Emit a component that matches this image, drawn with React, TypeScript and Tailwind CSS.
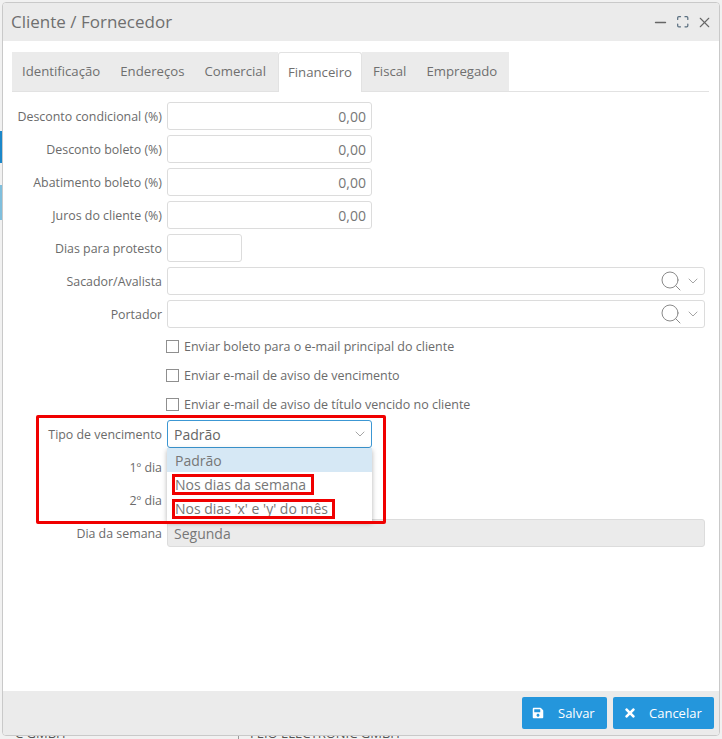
import { Maximize, Minus, Search, X, ChevronDown } from "lucide-react";
import { FaSave, FaTimes } from "react-icons/fa";

const font = "font-['Open_Sans',sans-serif]";

function Label({ children }: { children: React.ReactNode }) {
  return (
    <div className="w-[162px] shrink-0 whitespace-nowrap pr-[5px] pt-[2px] text-right text-[12.4px] text-[#6b6b6b]">
      {children}
    </div>
  );
}

function Row({ label, children }: { label: string; children?: React.ReactNode }) {
  return (
    <div className="flex h-[28px] items-center">
      <Label>{label}</Label>
      {children}
    </div>
  );
}

function NumberInput({ value }: { value: string }) {
  return (
    <div className="flex h-[28px] w-[205px] items-center justify-end rounded-[3px] border border-[#dcdcdc] bg-white pr-[5px] text-[14px] text-[#777]">
      {value}
    </div>
  );
}

function LookupInput() {
  return (
    <div className="flex h-[28px] w-[538px] items-center justify-end rounded-[3px] border border-[#dcdcdc] bg-white pr-[3px]">
      <Search size={24} strokeWidth={1} className="mr-[2px] text-[#8a8a8a]" />
      <ChevronDown size={16} strokeWidth={1} className="text-[#777]" />
    </div>
  );
}

function Check({ label }: { label: string }) {
  return (
    <div className="flex h-[29px] items-center pl-[161px]">
      <span className="h-[13px] w-[13px] shrink-0 border border-[#8f8f8f] bg-white" />
      <span className="ml-[5px] pt-[2px] text-[12.5px] text-[#6b6b6b]">{label}</span>
    </div>
  );
}

const tabs = ["Identificação", "Endereços", "Comercial", "Financeiro", "Fiscal", "Empregado"];

export default function App() {
  return (
    <div className={`relative h-[739px] w-[722px] overflow-hidden bg-[#f1f1f1] pl-[2px] pt-[2px] ${font}`}>
      {/* bits of the page behind the window */}
      <div className="absolute left-0 top-[131px] h-[32px] w-[2px] bg-[#1b87c9]" />
      <div className="absolute left-0 top-[185px] h-[35px] w-[2px] bg-[#7fbfdd]" />
      <div className="absolute left-[15px] top-[724px] text-[13px] text-[#555]">C GMBH</div>
      <div className="absolute left-[238px] top-[735px] h-[4px] w-px bg-[#999]" />
      <div className="absolute left-[250px] top-[724px] text-[13px] text-[#555]">FEIO ELECTRONIC GMBH</div>

      <div className="relative flex h-[734px] w-[718px] flex-col overflow-hidden rounded-[4px] border border-[#c9c9c9] bg-white">
        <div className="flex h-[38px] shrink-0 items-center justify-between bg-[#ebebeb] pl-[8px] pr-[6px]">
          <span className="text-[17px] text-[#6f6f6f]">Cliente / Fornecedor</span>
          <div className="flex items-center gap-[7px] text-[#666]">
            <Minus size={17} strokeWidth={2} />
            <Maximize size={13.5} strokeWidth={2.2} className="text-[#5a6f80]" />
            <X size={17} strokeWidth={1.5} />
          </div>
        </div>

        <div className="flex min-h-0 flex-1 flex-col pl-[9px] pr-[10px] pt-[11px]">
          <div className="flex h-[40px] shrink-0 border-b border-[#e2e2e2]">
            <div className="flex h-[39px] w-[266px] items-center bg-[#ebebeb] pl-[10px] text-[13.2px] text-[#6f6f6f]">
              <span>{tabs[0]}</span>
              <span className="ml-[20px]">{tabs[1]}</span>
              <span className="ml-[20px]">{tabs[2]}</span>
            </div>
            <div className="flex h-[40px] w-[84px] items-center justify-center rounded-t-[3px] border-x border-t border-[#e2e2e2] bg-white text-[13.2px] text-[#6f6f6f]">
              {tabs[3]}
            </div>
            <div className="flex h-[39px] items-center bg-[#ebebeb] pl-[11px] pr-[12px] text-[13.2px] text-[#6f6f6f]">
              <span>{tabs[4]}</span>
              <span className="ml-[20px]">{tabs[5]}</span>
            </div>
          </div>

          <div className="-ml-[7px] flex flex-col gap-[5px] pt-[10px]">
            <Row label="Desconto condicional (%)"><NumberInput value="0,00" /></Row>
            <Row label="Desconto boleto (%)"><NumberInput value="0,00" /></Row>
            <Row label="Abatimento boleto (%)"><NumberInput value="0,00" /></Row>
            <Row label="Juros do cliente (%)"><NumberInput value="0,00" /></Row>
            <Row label="Dias para protesto">
              <div className="h-[28px] w-[75px] rounded-[3px] border border-[#dcdcdc] bg-white" />
            </Row>
            <Row label="Sacador/Avalista"><LookupInput /></Row>
            <Row label="Portador"><LookupInput /></Row>
          </div>

          <div className="-ml-[7px] flex flex-col pt-[4px]">
            <Check label="Enviar boleto para o e-mail principal do cliente" />
            <Check label="Enviar e-mail de aviso de vencimento" />
            <Check label="Enviar e-mail de aviso de título vencido no cliente" />
          </div>

          <div className="-ml-[7px] flex flex-col gap-[5px] pt-[1px]">
            <Row label="Tipo de vencimento">
              <div className="flex h-[28px] w-[205px] items-center justify-between rounded-[3px] border border-[#3c97d3] bg-white pl-[6px] pr-[3px] text-[14px] text-[#666]">
                Padrão
                <ChevronDown size={16} strokeWidth={1} className="text-[#777]" />
              </div>
            </Row>
            <Row label="1º dia" />
            <Row label="2º dia" />
            <Row label="Dia da semana">
              <div className="flex h-[28px] w-[538px] items-center rounded-[3px] border border-[#dcdcdc] bg-[#ebebeb] pl-[6px] text-[14px] text-[#777]">
                Segunda
              </div>
            </Row>
          </div>
        </div>

        <div className="flex h-[44px] shrink-0 items-start justify-end gap-[6px] bg-[#ebebeb] pr-[5px] pt-[6px]">
          <button className="flex h-[32px] w-[85px] items-center rounded-[2px] bg-[#2496dc] pl-[10px] text-[13px] text-white">
            <FaSave size={12} />
            <span className="ml-[14px] pt-[1px]">Salvar</span>
          </button>
          <button className="flex h-[32px] w-[101px] items-center rounded-[2px] bg-[#2496dc] pl-[10px] text-[13px] text-white">
            <FaTimes size={14} />
            <span className="ml-[12px] pt-[1px]">Cancelar</span>
          </button>
        </div>
      </div>

      {/* opened list of the select */}
      <div className="absolute left-[167px] top-[448px] w-[205px] bg-white text-[14px] text-[#777] shadow-[0_2px_5px_rgba(0,0,0,0.3)]">
        <div className="flex h-[24px] items-center bg-[#d6e8f5] pl-[8px]">Padrão</div>
        <div className="flex h-[24.5px] items-center pl-[8px]">Nos dias da semana</div>
        <div className="flex h-[24.5px] items-center pl-[8px]">Nos dias 'x' e 'y' do mês</div>
      </div>

      {/* red marks drawn over the screenshot */}
      <div className="absolute left-[36px] top-[415px] h-[109px] w-[350px] rounded-[2px] border-[3px] border-[#f00000]" />
      <div className="absolute left-[172px] top-[474px] h-[21px] w-[142px] border-[3px] border-[#f00000]" />
      <div className="absolute left-[172px] top-[499px] h-[20px] w-[163px] border-[3px] border-[#f00000]" />
    </div>
  );
}
